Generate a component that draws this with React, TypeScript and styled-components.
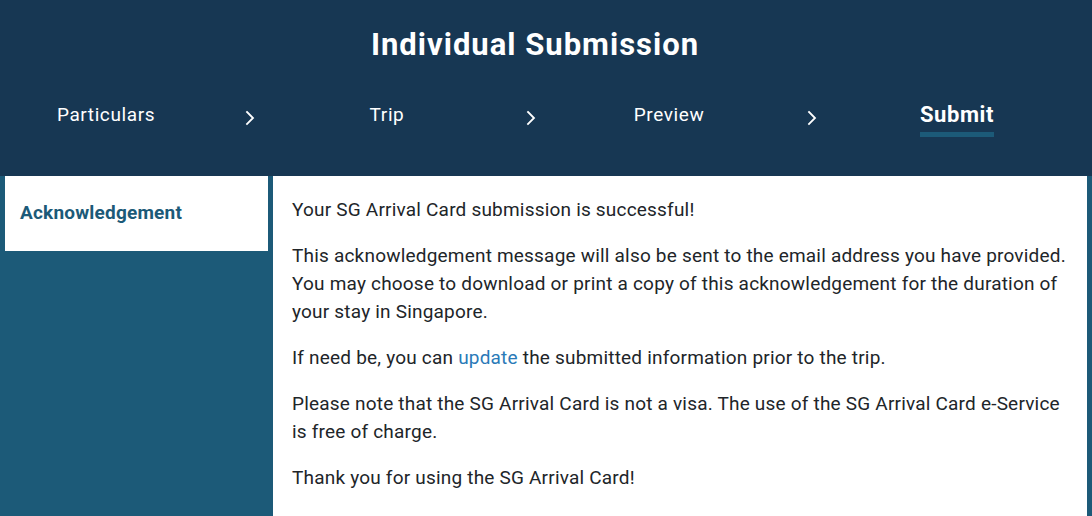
import React from "react";
import styled, { createGlobalStyle } from "styled-components";

const GlobalStyle = createGlobalStyle`
  html, body { margin: 0; padding: 0; background: #1c5a78; }
  body { font-family: Roboto, "Liberation Sans", Arial, sans-serif; }
  * { box-sizing: border-box; }
`;

const Page = styled.div`
  width: 1092px;
  min-height: 516px;
  display: flex;
  flex-direction: column;
  background: #1c5a78;
`;

const Header = styled.header`
  background: #173753;
  height: 176px;
  display: flex;
  flex-direction: column;
  align-items: stretch;
  color: #fff;
`;

const Title = styled.h1`
  margin: 0;
  padding: 27px 22px 0 0;
  height: 90px;
  text-align: center;
  font-size: 31px;
  font-weight: 700;
  letter-spacing: 1px;
  line-height: 36px;
`;

const Steps = styled.nav`
  display: grid;
  grid-template-columns: 212px 76px 198px 90px 186px 100px 190px;
  align-items: start;
  height: 86px;
`;

const Step = styled.div<{ $active?: boolean }>`
  display: flex;
  justify-content: center;
  font-size: ${(p) => (p.$active ? "22px" : "19px")};
  font-weight: ${(p) => (p.$active ? 700 : 400)};
  letter-spacing: 0.6px;
  line-height: 24px;
  padding-top: 13px;
`;

const StepLabel = styled.span<{ $active?: boolean }>`
  display: inline-block;
  padding-bottom: 5px;
  border-bottom: 5px solid ${(p) => (p.$active ? "#1c5a78" : "transparent")};
`;

const Chevron = styled.div`
  display: flex;
  justify-content: center;
  padding-top: 20px;
`;

const Body = styled.div`
  flex: 1;
  display: grid;
  grid-template-columns: 273px 1fr;
  padding-right: 5px;
`;

const Sidebar = styled.aside`
  padding-left: 5px;
  padding-right: 5px;
`;

const SideItem = styled.div`
  background: #fff;
  height: 75px;
  padding: 25px 15px 0;
  font-size: 19px;
  font-weight: 700;
  letter-spacing: 0.2px;
  line-height: 24px;
  color: #1c5a78;
`;

const Main = styled.main`
  background: #fff;
  padding: 20px 20px 20px 19px;
  color: #212529;
  font-size: 19px;
  letter-spacing: 0.2px;
  line-height: 28px;
`;

const Para = styled.p`
  margin: 0 0 18px;
`;

const Link = styled.a`
  color: #2a7ab8;
  text-decoration: none;
`;

const ChevronIcon = () => (
  <svg width="10" height="16" viewBox="0 0 10 16" fill="none">
    <polyline points="2,2 8,8 2,14" stroke="#fff" strokeWidth="1.8" strokeLinecap="square" />
  </svg>
);

const steps = ["Particulars", "Trip", "Preview", "Submit"];

export default function App() {
  return (
    <Page>
      <GlobalStyle />
      <Header>
        <Title>Individual Submission</Title>
        <Steps>
          {steps.map((s, i) => {
            const active = i === steps.length - 1;
            return (
              <React.Fragment key={s}>
                <Step $active={active}>
                  <StepLabel $active={active}>{s}</StepLabel>
                </Step>
                {!active && (
                  <Chevron>
                    <ChevronIcon />
                  </Chevron>
                )}
              </React.Fragment>
            );
          })}
        </Steps>
      </Header>
      <Body>
        <Sidebar>
          <SideItem>Acknowledgement</SideItem>
        </Sidebar>
        <Main>
          <Para>Your SG Arrival Card submission is successful!</Para>
          <Para>
            This acknowledgement message will also be sent to the email address you have provided.
            You may choose to download or print a copy of this acknowledgement for the duration of
            your stay in Singapore.
          </Para>
          <Para>
            If need be, you can <Link href="#">update</Link> the submitted information prior to the trip.
          </Para>
          <Para>
            Please note that the SG Arrival Card is not a visa. The use of the SG Arrival Card e-Service
            is free of charge.
          </Para>
          <Para>Thank you for using the SG Arrival Card!</Para>
        </Main>
      </Body>
    </Page>
  );
}
